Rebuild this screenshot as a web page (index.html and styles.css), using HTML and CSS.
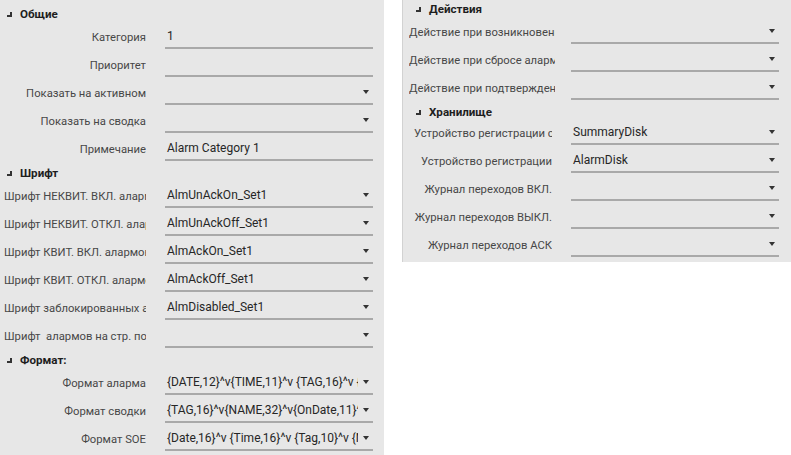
FILE: index.html
```html
<!DOCTYPE html>
<html lang="ru">
<head>
<meta charset="utf-8">
<title>Alarm Category</title>
<link rel="stylesheet" href="styles.css">
</head>
<body>
<div class="canvas">
  <section class="panel panel-left">
    <div class="group-header gh-first"><span class="caret"></span>Общие</div>
    <div class="row"><div class="label">Категория</div><div class="field"><span class="value">1</span></div></div>
    <div class="row"><div class="label">Приоритет</div><div class="field"><span class="value"></span></div></div>
    <div class="row"><div class="label">Показать на активном</div><div class="field"><span class="value"></span><span class="arrow"></span></div></div>
    <div class="row"><div class="label">Показать на сводка</div><div class="field"><span class="value"></span><span class="arrow"></span></div></div>
    <div class="row"><div class="label">Примечание</div><div class="field"><span class="value">Alarm Category 1</span></div></div>

    <div class="group-header"><span class="caret"></span>Шрифт</div>
    <div class="row"><div class="label">Шрифт НЕКВИТ. ВКЛ. алармов</div><div class="field"><span class="value">AlmUnAckOn_Set1</span><span class="arrow"></span></div></div>
    <div class="row"><div class="label">Шрифт НЕКВИТ. ОТКЛ. алармов</div><div class="field"><span class="value">AlmUnAckOff_Set1</span><span class="arrow"></span></div></div>
    <div class="row"><div class="label">Шрифт КВИТ. ВКЛ. алармов</div><div class="field"><span class="value">AlmAckOn_Set1</span><span class="arrow"></span></div></div>
    <div class="row"><div class="label">Шрифт КВИТ. ОТКЛ. алармов</div><div class="field"><span class="value">AlmAckOff_Set1</span><span class="arrow"></span></div></div>
    <div class="row"><div class="label">Шрифт заблокированных алармов</div><div class="field"><span class="value">AlmDisabled_Set1</span><span class="arrow"></span></div></div>
    <div class="row"><div class="label">Шрифт  алармов на стр. подавления</div><div class="field"><span class="value"></span><span class="arrow"></span></div></div>

    <div class="group-header"><span class="caret"></span>Формат:</div>
    <div class="row"><div class="label">Формат аларма</div><div class="field"><span class="value">{DATE,12}^v{TIME,11}^v {TAG,16}^v {NAME,32}^v</span><span class="arrow"></span></div></div>
    <div class="row"><div class="label">Формат сводки</div><div class="field"><span class="value">{TAG,16}^v{NAME,32}^v{OnDate,11}^v{OnTime,11}</span><span class="arrow"></span></div></div>
    <div class="row"><div class="label">Формат SOE</div><div class="field"><span class="value">{Date,16}^v {Time,16}^v {Tag,10}^v {Name,32}</span><span class="arrow"></span></div></div>
  </section>

  <section class="panel panel-right">
    <div class="group-header gh-top"><span class="caret"></span>Действия</div>
    <div class="row row-r"><div class="label">Действие при возникновении аларма</div><div class="field"><span class="value"></span><span class="arrow"></span></div></div>
    <div class="row row-r"><div class="label">Действие при сбросе аларма</div><div class="field"><span class="value"></span><span class="arrow"></span></div></div>
    <div class="row row-r"><div class="label">Действие при подтверждении аларма</div><div class="field"><span class="value"></span><span class="arrow"></span></div></div>

    <div class="group-header gh-mid"><span class="caret"></span>Хранилище</div>
    <div class="row row-s"><div class="label">Устройство регистрации сводки</div><div class="field"><span class="value">SummaryDisk</span><span class="arrow"></span></div></div>
    <div class="row row-s"><div class="label">Устройство регистрации</div><div class="field"><span class="value">AlarmDisk</span><span class="arrow"></span></div></div>
    <div class="row row-s"><div class="label">Журнал переходов ВКЛ.</div><div class="field"><span class="value"></span><span class="arrow"></span></div></div>
    <div class="row row-s"><div class="label">Журнал переходов ВЫКЛ.</div><div class="field"><span class="value"></span><span class="arrow"></span></div></div>
    <div class="row row-s"><div class="label">Журнал переходов АСК</div><div class="field"><span class="value"></span><span class="arrow"></span></div></div>
  </section>
</div>
</body>
</html>
```

FILE: styles.css
```css
* { box-sizing: border-box; }
html, body {
  margin: 0;
  padding: 0;
  background: #ffffff;
}
body {
  font-family: Roboto, "Noto Sans", "Liberation Sans", sans-serif;
  font-size: 12px;
  color: #333;
}
.canvas {
  display: flex;
  align-items: flex-start;
  width: 791px;
  height: 455px;
  overflow: hidden;
}
.panel {
  background: #e7e7e7;
  display: flex;
  flex-direction: column;
}
.panel-left {
  width: 384px;
  height: 455px;
}
.panel-right {
  margin-left: 18px;
  width: 389px;
  height: 262px;
  border-left: 1px solid #d2d2d2;
}
.group-header {
  display: flex;
  align-items: center;
  height: 19px;
  padding-top: 5px;
  padding-left: 7px;
  font-weight: 700;
  font-size: 11.6px;
  color: #1e1e1e;
  line-height: 14px;
}
.gh-first {
  height: 21px;
  padding-top: 7px;
}
.gh-top {
  height: 16px;
  padding-top: 2px;
  padding-left: 13px;
}
.gh-mid {
  height: 17px;
  padding-top: 7px;
  padding-left: 13px;
}
.caret {
  display: inline-block;
  width: 5px;
  height: 5px;
  border-right: 2px solid #333;
  border-bottom: 2px solid #333;
  margin-right: 8px;
  margin-top: 1px;
}
.row {
  display: flex;
  height: 28px;
}
.label {
  width: 142px;
  margin-left: 4px;
  padding-top: 10px;
  line-height: 14px;
  font-size: 11.25px;
  text-align: right;
  white-space: pre;
  overflow: hidden;
  color: #474747;
}
.field {
  display: flex;
  align-items: center;
  width: 208px;
  margin-left: 19px;
  padding-top: 4px;
  border-bottom: 2px solid #a9a9a9;
}
.value {
  flex: 1;
  min-width: 0;
  padding-left: 2px;
  white-space: nowrap;
  overflow: hidden;
  line-height: 14px;
  color: #262626;
}
.arrow {
  width: 0;
  height: 0;
  margin-left: 5px;
  margin-right: 4px;
  border-left: 3.5px solid transparent;
  border-right: 3.5px solid transparent;
  border-top: 4px solid #333;
}
.row-r .label {
  margin-left: 6px;
  width: 146px;
  text-align: left;
}
.row-r .field {
  margin-left: 16px;
}
.row-s .label {
  margin-left: 11px;
  width: 138px;
}
.row-s .field {
  margin-left: 19px;
}
```
